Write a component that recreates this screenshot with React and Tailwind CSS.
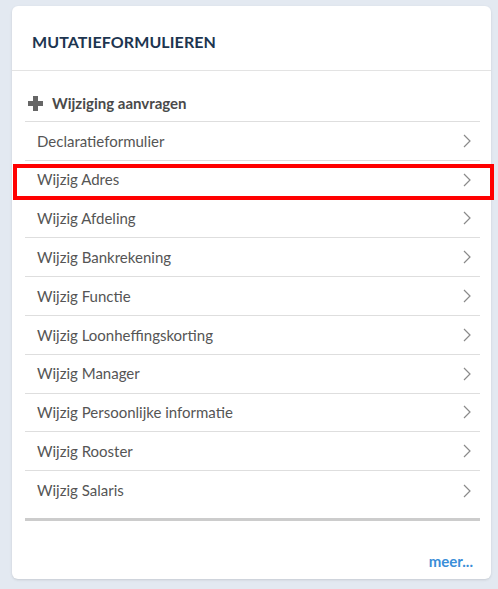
import React from "react";

const items = [
  "Declaratieformulier",
  "Wijzig Adres",
  "Wijzig Afdeling",
  "Wijzig Bankrekening",
  "Wijzig Functie",
  "Wijzig Loonheffingskorting",
  "Wijzig Manager",
  "Wijzig Persoonlijke informatie",
  "Wijzig Rooster",
  "Wijzig Salaris",
];

const Chevron = () => (
  <svg width="8" height="14" viewBox="0 0 8 14" fill="none">
    <polyline points="1,1 7,7 1,13" stroke="#8a8a8a" strokeWidth="1.2" />
  </svg>
);

const Plus = () => (
  <svg width="15" height="15" viewBox="0 0 15 15">
    <rect x="5" y="0" width="5" height="15" fill="#666" />
    <rect x="0" y="5" width="15" height="5" fill="#666" />
  </svg>
);

const App = () => {
  return (
    <div className="relative h-[589px] w-[498px] bg-[#e3e9f1] pt-[6px] pl-[12px] font-['Lato',sans-serif]">
      <div className="flex h-[573px] w-[479px] flex-col rounded-[6px] bg-white shadow-sm">
        <div className="flex h-[65px] items-center border-b border-[#e3e3e3] pl-5 pt-[7px]">
          <h2 className="text-[16px] font-bold tracking-[0.1px] text-[#1d3550]">
            MUTATIEFORMULIEREN
          </h2>
        </div>

        <div className="mx-[13px] w-[455px] border-b-[3px] border-[#cccccc] pb-[8px]">
          <div className="flex h-[51px] items-center gap-[9px] border-b border-[#dedede] pl-[3px] pt-[15px]">
            <Plus />
            <span className="text-[15px] font-bold text-[#4a4a4a]">Wijziging aanvragen</span>
          </div>
          {items.map((item, i) => (
            <div
              key={item}
              className={
                "flex h-[38.8px] items-center justify-between pl-[12px] pr-[9px] " +
                (i < items.length - 1 ? "border-b border-[#dedede]" : "")
              }
            >
              <span className="text-[15px] text-[#555555]">{item}</span>
              <Chevron />
            </div>
          ))}
        </div>

        <div className="mt-auto flex justify-end pb-[7px] pr-[18px]">
          <a href="#" className="text-[15px] font-bold text-[#3a8ed8]">
            meer...
          </a>
        </div>
      </div>

      <div className="absolute left-[13px] top-[164px] h-[36px] w-[481px] border-4 border-[#ff0000]" />
    </div>
  );
};

export default App;
